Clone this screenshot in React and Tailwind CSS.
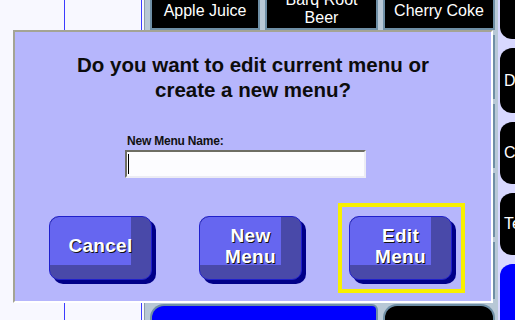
import React from 'react';

const Tile = ({ label, blue, className = '' }) => (
    <div className={`flex items-center justify-center text-center text-white text-[16px] leading-[16px] ring-2 ring-[#6f8fa6] ${blue ? 'bg-[#0000ff]' : 'bg-black'} ${className}`}>
        {label}
    </div>
);

const BigButton = ({ children }) => (
    <div className="relative w-[103px] h-[64px] rounded-[10px] border border-[#2020cc] bg-[#4949a9] shadow-[4px_4px_0_#000088] overflow-hidden">
        <div className="absolute top-0 left-0 w-[81px] h-[48px] bg-[#6666f0] rounded-tl-[9px]" />
        <div className="relative h-full flex items-center justify-center pb-[5px] text-center text-white font-bold text-[19px] leading-[21px] tracking-[0.3px] [text-shadow:1px_1px_0_#111]">
            {children}
        </div>
    </div>
);

const App = () => {
    return (
        <div className="relative w-[515px] h-[320px] overflow-hidden flex bg-[#f8f8ff] font-['Liberation_Sans',Arial,sans-serif]">
            {/* left list columns */}
            <div className="flex h-full shrink-0">
                <div className="w-[65px] h-full border-r border-[#3c3cff]" />
                <div className="w-[77px] h-full border-r border-[#3c3cff]" />
                <div className="w-[2px] h-full" />
            </div>

            {/* drink tiles */}
            <div className="w-[354px] h-full shrink-0 border-l border-[#8a9aaa] bg-[#b8c8d6] pl-[7px] pr-[5px]">
                <div className="grid grid-cols-[106px_109px_108px] grid-rows-[28px_60px_60px_60px_53px_60px] gap-x-[9px] gap-y-[9px]">
                    <Tile label="Apple Juice" className="pb-[6px]" />
                    <Tile label={<span>Barq Root<br />Beer</span>} className="pb-[10px] leading-[18px]" />
                    <Tile label="Cherry Coke" className="pb-[6px]" />
                    <Tile label="Coca Cola" />
                    <Tile label="Diet Coke" />
                    <Tile label="Dr Pepper" />
                    <Tile label="Fanta" />
                    <Tile label="Iced Tea" />
                    <Tile label="Lemonade" />
                    <Tile label="Milk" />
                    <Tile label="Orange Juice" />
                    <Tile label="Sprite" />
                    <Tile label="Water" />
                    <Tile label="Coffee" />
                    <Tile label="Hot Tea" />
                    <Tile label="" blue className="col-span-2 rounded-tl-[12px] rounded-tr-[4px]" />
                    <Tile label="" className="rounded-t-[12px]" />
                </div>
            </div>

            {/* right category column */}
            <div className="flex-1 h-full bg-[#d8d8ff] pl-[2px]">
                <div className="w-[110px] flex flex-col gap-[9px]">
                    <div className="h-[39px] bg-black rounded-b-[12px]" />
                    <div className="h-[65px] bg-black rounded-[12px] flex items-center pl-[4px] text-white text-[16px]">Drinks</div>
                    <div className="h-[62px] bg-black rounded-[12px] flex items-center pl-[4px] text-white text-[16px]">Coffee</div>
                    <div className="h-[62px] bg-black rounded-[12px] flex items-center pl-[4px] text-white text-[16px]">Tea</div>
                    <div className="h-[70px] bg-[#0000ff] rounded-[12px]" />
                </div>
            </div>

            {/* modal dialog */}
            <div className="absolute left-[13px] top-[30px] w-[480px] h-[273px] bg-[#b6b6fc] border-2 border-t-[#a4a494] border-l-[#a4a494] border-r-white border-b-white flex flex-col">
                <div className="pt-[20px] text-center text-[#0c0c0c] font-bold text-[20.5px] leading-[25px]">
                    Do you want to edit current menu or<br />create a new menu?
                </div>

                <div className="mt-[32px] ml-[110px]">
                    <div className="text-[12px] leading-[14px] font-bold text-[#111] tracking-[-0.2px] pl-[2px]">New Menu Name:</div>
                    <div className="mt-[2px] w-[241px] h-[28px] bg-[#fcfcff] border-2 border-t-[#6e6e64] border-l-[#6e6e64] border-r-[#ececf4] border-b-[#ececf4] flex items-center pl-[1px]">
                        <div className="w-[1px] h-[20px] bg-black" />
                    </div>
                </div>

                <div className="mt-[25px] pl-[34px] flex items-start">
                    <div className="mt-[13px]">
                        <BigButton>Cancel</BigButton>
                    </div>
                    <div className="mt-[13px] ml-[47px]">
                        <BigButton>New<br />Menu</BigButton>
                    </div>
                    <div className="ml-[36px] border-4 border-[#f8f000] pt-[9px] pl-[7px] pr-[9px] pb-[9px]">
                        <BigButton>Edit<br />Menu</BigButton>
                    </div>
                </div>
            </div>
        </div>
    );
};

export default App;
